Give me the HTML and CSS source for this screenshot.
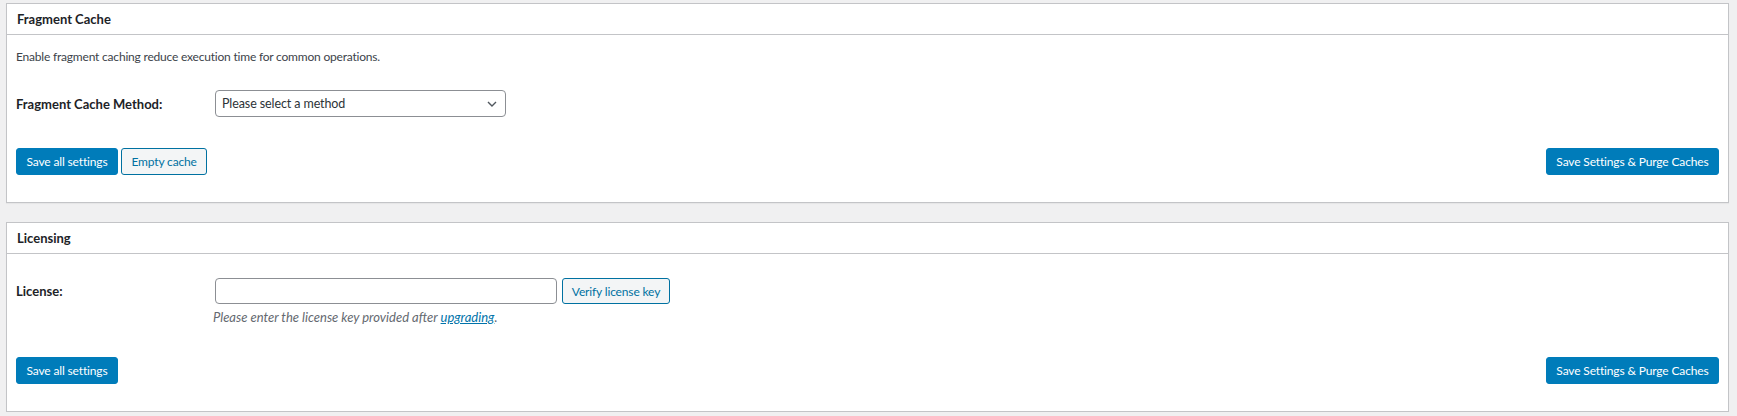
FILE: index.html
```html
<!DOCTYPE html>
<html lang="en">
<head>
<meta charset="utf-8">
<title>Fragment Cache</title>
<link rel="stylesheet" href="styles.css">
</head>
<body>
<div class="wrap">
  <section class="postbox">
    <h2 class="hndle">Fragment Cache</h2>
    <div class="inside inside-fc">
      <p class="description">Enable fragment caching reduce execution time for common operations.</p>
      <div class="form-row">
        <label class="form-label">Fragment Cache Method:</label>
        <div class="form-field">
          <div class="select">
            <span class="select-text">Please select a method</span>
            <svg class="chevron" width="10" height="6" viewBox="0 0 10 6"><polyline points="1,1 5,5 9,1" fill="none" stroke="#50575e" stroke-width="1.4"/></svg>
          </div>
        </div>
      </div>
      <div class="actions">
        <div class="actions-left">
          <button class="button button-primary">Save all settings</button>
          <button class="button button-secondary">Empty cache</button>
        </div>
        <button class="button button-primary">Save Settings &amp; Purge Caches</button>
      </div>
    </div>
  </section>

  <section class="postbox">
    <h2 class="hndle">Licensing</h2>
    <div class="inside inside-lic">
      <div class="form-row">
        <label class="form-label">License:</label>
        <div class="form-field">
          <div class="field-line">
            <input class="text-input" type="text">
            <button class="button button-secondary button-verify">Verify license key</button>
          </div>
        </div>
      </div>
      <p class="hint">Please enter the license key provided after <a href="#" class="link">upgrading</a>.</p>
      <div class="actions actions-lic">
        <div class="actions-left">
          <button class="button button-primary">Save all settings</button>
        </div>
        <button class="button button-primary">Save Settings &amp; Purge Caches</button>
      </div>
    </div>
  </section>
</div>
</body>
</html>
```
FILE: styles.css
```css
html, body {
  margin: 0;
  padding: 0;
  background: #f0f0f1;
}
body {
  font-family: Lato, "Noto Sans", sans-serif;
  font-size: 12px;
  color: #3c434a;
}
.wrap {
  padding: 3px 8px 0 6px;
  display: flex;
  flex-direction: column;
  gap: 19px;
}
.postbox {
  background: #fff;
  border: 1px solid #c3c4c7;
  box-shadow: 0 1px 1px rgba(0,0,0,.04);
}
.hndle {
  margin: 0;
  height: 30px;
  line-height: 30px;
  padding: 0 10px;
  font-size: 13px;
  font-weight: 700;
  color: #1d2327;
  border-bottom: 1px solid #c3c4c7;
}
.inside {
  padding: 0 9px 27px 9px;
}
.inside-fc { padding-top: 13px; }
.inside-lic { padding-top: 24px; }
.description {
  margin: 0 0 24px 0;
  line-height: 18px;
  font-size: 12px;
  letter-spacing: -0.2px;
  color: #3c434a;
}
.form-row {
  display: flex;
  align-items: center;
}
.form-label {
  width: 199px;
  flex: none;
  font-size: 13px;
  font-weight: 700;
  color: #1d2327;
}
.form-field {
  flex: none;
}
.select {
  box-sizing: border-box;
  width: 291px;
  height: 27px;
  border: 1px solid #8c8f94;
  border-radius: 4px;
  display: flex;
  align-items: center;
  justify-content: space-between;
  padding: 0 8px 0 6px;
  color: #2c3338;
  font-size: 12.5px;
  letter-spacing: -0.1px;
}
.chevron { display: block; }
.field-line {
  display: flex;
  gap: 5px;
  align-items: center;
}
.text-input {
  box-sizing: border-box;
  width: 342px;
  height: 26px;
  margin: 0;
  border: 1px solid #8c8f94;
  border-radius: 4px;
  background: #fff;
  font-family: inherit;
}
.hint {
  margin: 4px 0 0 197px;
  line-height: 18px;
  font-size: 13px;
  font-style: italic;
  color: #646970;
}
.link {
  color: #0073aa;
  text-decoration: underline;
}
.actions {
  margin-top: 31px;
  display: flex;
  justify-content: space-between;
  align-items: center;
}
.actions-lic { margin-top: 31px; }
.actions-left {
  display: flex;
  gap: 3px;
}
.button {
  box-sizing: border-box;
  height: 27px;
  margin: 0;
  padding: 0 9.5px;
  border-radius: 3px;
  font-family: inherit;
  font-size: 12px;
  letter-spacing: -0.15px;
  line-height: 25px;
  cursor: pointer;
  white-space: nowrap;
}
.button-primary {
  background: #007cba;
  border: 1px solid #007cba;
  color: #fff;
}
.button-secondary {
  background: #f3f5f6;
  border: 1px solid #0071a1;
  color: #0071a1;
}
.button-verify {
  height: 26px;
  width: 108px;
  padding: 0;
}
```
